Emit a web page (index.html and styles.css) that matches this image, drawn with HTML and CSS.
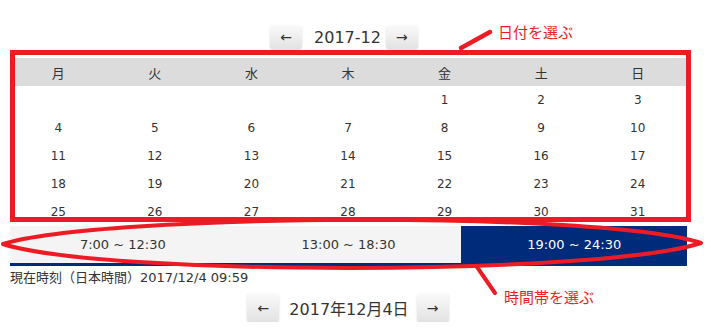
FILE: index.html
```html
<!DOCTYPE html>
<html lang="ja">
<head>
    <meta charset="UTF-8">
    <title>日付と時間帯を選ぶ</title>
    <link rel="stylesheet" href="styles.css">
</head>
<body>

    <div class="wrap">
        <div class="month-nav">
            <button class="nav-btn">←</button>
            <span class="month-label">2017-12</span>
            <button class="nav-btn">→</button>
        </div>

        <div class="calendar">
            <div class="head">月</div>
            <div class="head">火</div>
            <div class="head">水</div>
            <div class="head">木</div>
            <div class="head">金</div>
            <div class="head">土</div>
            <div class="head">日</div>

            <div class="day"></div><div class="day"></div><div class="day"></div><div class="day"></div>
            <div class="day">1</div><div class="day">2</div><div class="day">3</div>
            <div class="day">4</div><div class="day">5</div><div class="day">6</div><div class="day">7</div>
            <div class="day">8</div><div class="day">9</div><div class="day">10</div>
            <div class="day">11</div><div class="day">12</div><div class="day">13</div><div class="day">14</div>
            <div class="day">15</div><div class="day">16</div><div class="day">17</div>
            <div class="day">18</div><div class="day">19</div><div class="day">20</div><div class="day">21</div>
            <div class="day">22</div><div class="day">23</div><div class="day">24</div>
            <div class="day">25</div><div class="day">26</div><div class="day">27</div><div class="day">28</div>
            <div class="day">29</div><div class="day">30</div><div class="day">31</div>
        </div>

        <div class="slots">
            <div class="slot">7:00 ~ 12:30</div>
            <div class="slot">13:00 ~ 18:30</div>
            <div class="slot active">19:00 ~ 24:30</div>
        </div>

        <p class="now">現在時刻（日本時間）2017/12/4 09:59</p>

        <div class="day-nav">
            <button class="nav-btn big">←</button>
            <span class="day-label">2017年12月4日</span>
            <button class="nav-btn big">→</button>
        </div>
    </div>

    <!-- red hand-drawn notes on top of the screen -->
    <svg class="notes" width="726" height="336" viewBox="0 0 726 336">
        <rect x="12.5" y="52.5" width="676" height="167" fill="none" stroke="#ed1c24" stroke-width="5"/>
        <line x1="461" y1="48" x2="490" y2="32" stroke="#ed1c24" stroke-width="4.5" stroke-linecap="round"/>
        <path d="M3,244 C100,214 600,210 701,243 C600,276 100,276 3,244 Z" fill="none" stroke="#ed1c24" stroke-width="4" stroke-linejoin="round"/>
        <line x1="477" y1="267" x2="495" y2="293" stroke="#ed1c24" stroke-width="4" stroke-linecap="round"/>
    </svg>
    <span class="note note-date">日付を選ぶ</span>
    <span class="note note-time">時間帯を選ぶ</span>

</body>
</html>
```

FILE: styles.css
```css
body {
    margin: 0;
    font-family: "DejaVu Sans", "Noto Sans CJK JP", sans-serif;
    color: #333;
    background: #fff;
}
.wrap {
    width: 676px;
    margin-left: 10px;
    padding-top: 25px;
}
.month-nav, .day-nav {
    display: flex;
    justify-content: center;
    align-items: center;
}
.month-nav {
    height: 24px;
    margin-bottom: 9px;
}
.nav-btn {
    width: 32px;
    height: 24px;
    border: none;
    border-radius: 3px;
    background: linear-gradient(#fafafa, #e2e2e2);
    box-shadow: 0 1px 2px rgba(0, 0, 0, 0.15);
    font-family: "DejaVu Sans", sans-serif;
    font-size: 14px;
    color: #333;
    padding: 0;
}
.nav-btn.big {
    height: 29px;
}
.month-label {
    font-size: 16px;
    margin: 0 5px 0 12px;
}
.month-nav .nav-btn:first-child {
    margin-left: -8px;
}
.day-label {
    font-size: 16px;
    margin: 0 8px 0 10px;
}
.calendar {
    display: grid;
    grid-template-columns: repeat(7, 1fr);
    grid-auto-rows: 28px;
    font-size: 12px;
}
.head {
    background: #dcdcdc;
    display: flex;
    align-items: center;
    justify-content: center;
    font-size: 13px;
}
.day {
    display: flex;
    align-items: center;
    justify-content: center;
}
.slots {
    display: flex;
    width: 677px;
    font-size: 13px;
}
.slot {
    flex: 1;
    height: 37px;
    line-height: 37px;
    text-align: center;
    background: #f4f4f4;
    border-bottom: 3px solid #002a7a;
}
.slot.active {
    background: #002a7a;
    color: #fff;
}
.now {
    margin: 3px 0 0;
    font-size: 13px;
    line-height: 18px;
}
.day-nav {
    margin-top: 6px;
}
.notes {
    position: absolute;
    left: 0;
    top: 0;
    pointer-events: none;
}
.note {
    position: absolute;
    color: #ed1c24;
    font-family: "Noto Sans CJK JP", sans-serif;
    font-size: 15px;
    line-height: 20px;
}
.note-date {
    left: 498px;
    top: 22px;
}
.note-time {
    left: 504px;
    top: 287px;
}
```
